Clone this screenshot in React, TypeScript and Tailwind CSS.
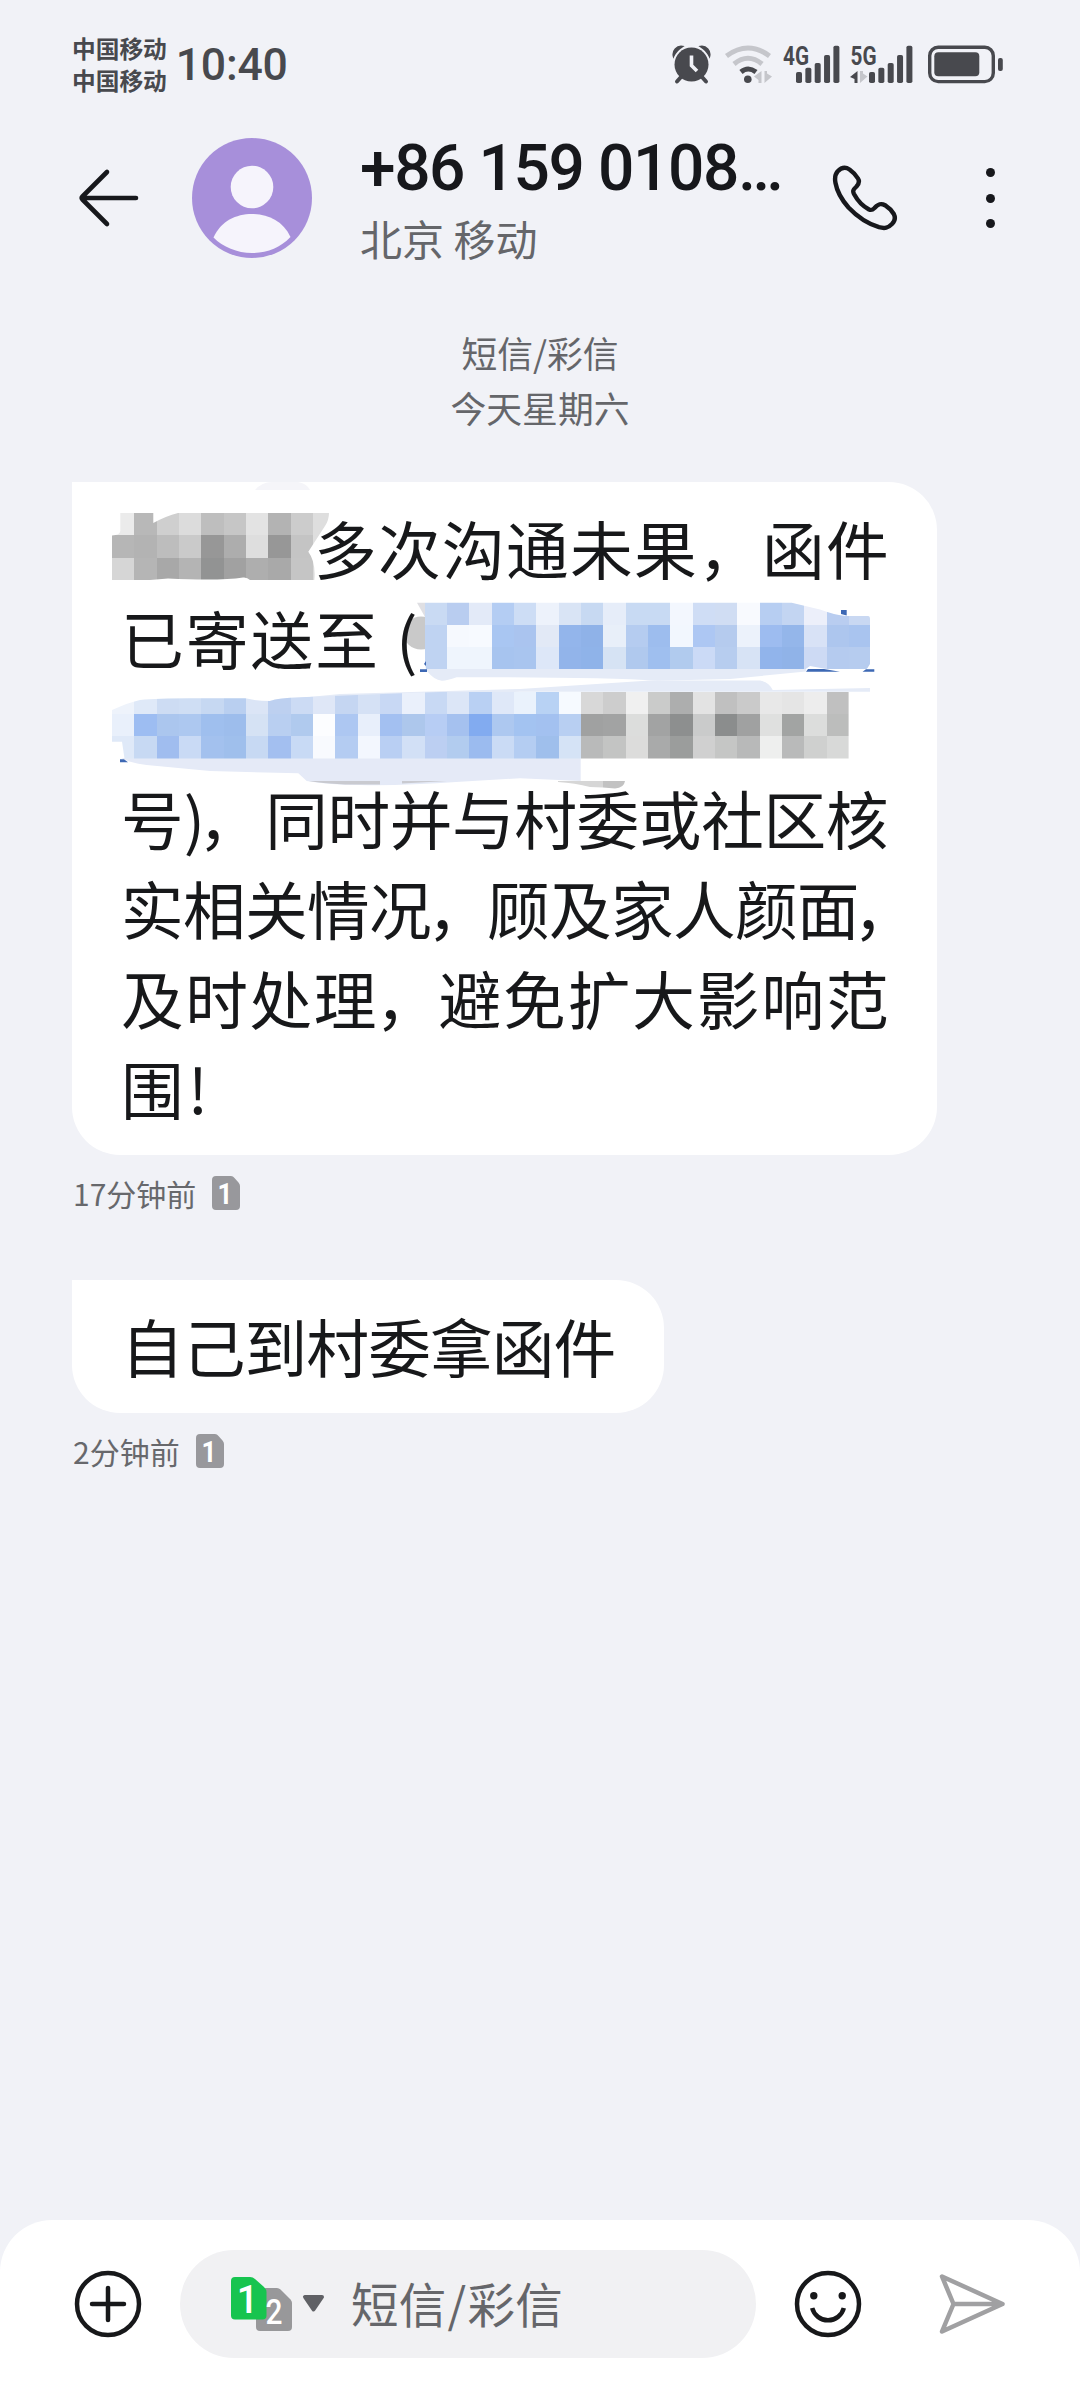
import React from 'react';

const CELL = 22.33;

type MosaicRow = { row: number; col: number; colors: string };

// redacted areas, one hex colour per cell
const nameRows: MosaicRow[] = [
  { row: 0, col: 0, colors: 'ebebeb b8b8b8 cfcfcf dcdcdc bebebe c6c6c6 e3e3e3 b3b3b3 cccccc dedede' },
  { row: 1, col: 0, colors: 'b6b6b6 b3b3b3 bdbdbd cacaca 979797 adadad dedede 979797 c4c4c4 dedede' },
  { row: 2, col: 0, colors: 'd6d6d6 b5b5b5 a8a8a8 b4b4b4 929393 a1a1a1 aeaeae a9a9a9 c5c5c5 dadada' },
];

const addressTopRows: MosaicRow[] = [
  { row: 4, col: 14, colors: 'c9daf3 b9cdf0 e3eaf8 b4cdf3 cdddf5 edf2fb d9e4f5 c7d9f2 e6edf9 c8daf3 c8daf3 f3f7fe cfddf5 d0ddf3 f8fafe b7cef2 c3d5f2 eceffa b9cdf0 c9d8f2' },
  { row: 5, col: 14, colors: 'bfd3f2 f6f9fe f7faff a9c6f2 aac4ef e2e9f6 93b5eb 8fb2e8 e8eff9 b5ccf0 9dbdee f2f7fe adc7f3 b5cbee ecf2fb 9dbcf0 94b6ea d8e2f6 adc6ee a9c4ef' },
  { row: 6, col: 14, colors: 'bfd3f2 eff5fd eff5fd a7c4ef a9c5ef dde7f8 92b4ea 8fb3e9 d6e3f4 b0c9ee 9fbfef b1cbee cbdaf6 b7cdef d7e3f5 91b4eb 90b3e8 cddaf4 b5cbef b6ccef' },
];

const addressBottomRows: MosaicRow[] = [
  { row: 8, col: 0, colors: 'eef3fb dfe9f8 cddcf3 cfdef4 c6d8f2 b9cff0 dbe5f6 bdd0f0 ccdbf4 dfe7f7 c5d6f2 d5e1f5 c8d8f4 eaf0fb c8d9f4 dce6f7 b9d0f3 dfe8f8 eaf2fc b8d2f4 f6faff d8d8d8 cdcdcd f0f0f0 cacbca adaeae e3e3e3 c0c0c0 cacaca e8e8e8 e5e5e5 ededed c0c0c0' },
  { row: 9, col: 0, colors: 'e9f0fb 9dbdf2 abc6ee adc8f0 9fbfee 9dbdec d5e2f4 b9cff1 b0caee fcfdff adc7f2 e8effb a3c0f1 adc7ec b7cdf4 a5c1ef 82abf0 adc8f0 a3c3f1 a3c1f0 b8cff2 a0a1a1 a2a3a3 dcdddc a2a3a3 8d8f8f cacbcb 8b8d8d a0a1a1 dfe0df a2a4a3 dcdddc bcbdbc' },
  { row: 10, col: 0, colors: 'dfe9f8 c7d9f3 a0bdef c9daf5 a3c1ee 9fbfec c7d9f3 a3bff0 c8daf5 f8fafe b4ccf2 f3f7fe b9cff3 d2e0f6 bccff2 b2ccef 9bbbef cadbf5 b4cdf2 9fbfec d5e3f6 b9baba c3c4c3 dcdcdb a9aaaa 9b9d9c d0d0d0 c5c6c5 b8b9b9 eeefee b9baba cfd0cf d8d9d8' },
];

function Cells({ rows }: { rows: MosaicRow[] }) {
  return (
    <>
      {rows.map(({ row, col, colors }) =>
        colors.split(' ').map((c, i) => (
          <rect
            key={`${row}-${i}`}
            x={112 + (col + i) * CELL}
            y={513 + row * CELL}
            width={CELL}
            height={CELL}
            fill={`#${c}`}
            shapeRendering="crispEdges"
          />
        ))
      )}
    </>
  );
}

function Mosaic() {
  return (
    <svg className="absolute left-0 top-0 h-[673px] w-[865px]" viewBox="72 482 865 673">
      <defs>
        <clipPath id="name">
          <path d="M120.3 513H153.3V523Q166 516 178 513H329Q329 520 325 526L308.3 551.7Q316 562 314.3 580H250Q247 577 243 577.5Q220 581 168 578.5L150 580H112V535.5Q120 535 120.3 531Z" />
        </clipPath>
        <clipPath id="addressTop">
          <path d="M424 602.7H791.7L820 609.5Q835 615 846 616H868Q870 616 870 619V664Q866 672 858 673Q840 673.5 829 669.5L810 666L805 669.5H426L424.5 655Z" />
        </clipPath>
        <clipPath id="addressBottom">
          <path d="M112 710Q130 702 140 700Q160 698 200 698.3H245.3Q257 701 270 701Q278 698 300 697.3L402 693.3L470 691H848.6V758.6H124.5L122 741.7H112Z" />
        </clipPath>
      </defs>
      <path d="M255 490Q262 482 272 482H298Q306 483 310 490Z" fill="#f5f5f9" />
      <ellipse cx="421" cy="633" rx="17.5" ry="16.5" fill="#c9c9c9" />
      <path d="M417 602.7H425V617Z" fill="#dfdfe3" />
      <path d="M425 669H806V671.5L730 679L657 680.7Q600 677 456.7 677.3Q446 681 441.7 680.7Q434 680 427 671Z" fill="#e5ebf7" />
      <path d="M268 701L340 694L520 689L650 680.5H760Q769 682 772.7 690L870 688V691.7H520L300 700Z" fill="#e5ebf7" />
      <path d="M121.3 758H580.7V781L520 778.3L460 781.7Q400 786 360 785Q330 785 306.7 781L298.3 773.3L210 771L146.7 765Q130 763 121.3 758Z" fill="#e5eaf7" />
      <path d="M309 781H380V784.5H345Q320 783 309 781ZM402 781H447L402 783.5Z" fill="#c9cad0" />
      <path d="M558 781H603V787.5L590 787Q575 783 558 782Z" fill="#d6d6d6" />
      <path d="M603 781H625Q624 788 615 788.5L603 787.5Z" fill="#c2c2c2" />
      <g clipPath="url(#name)"><Cells rows={nameRows} /></g>
      <g clipPath="url(#addressTop)"><Cells rows={addressTopRows} /></g>
      <g clipPath="url(#addressBottom)"><Cells rows={addressBottomRows} /></g>
      <g fill="#3d68b4">
        <path d="M420 669.3H427V672H420ZM424 664L426 661V666Z" />
        <path d="M806 671.8L808 669H824L840 671.8ZM862.5 671.8L866 669.3H874.3V671.8Z" />
        <path d="M841 610H846.7V615.5L841 614ZM120 759.3H124L128 762.2H120Z" />
      </g>
    </svg>
  );
}

function SignalBars({ x }: { x: number }) {
  const tops = [72, 67.7, 63, 55, 45.7];
  return (
    <>
      {tops.map((top, i) => (
        <rect key={top} x={x + i * 9.35} y={top} width="6" height={83 - top} rx="1.8" />
      ))}
    </>
  );
}

function StatusBar() {
  return (
    <div className="flex h-[130px] items-center justify-between pl-[72px] pr-[77px] text-[#48494e]">
      <div className="flex items-center">
        <div className="mb-[2px] text-[23.7px] font-bold leading-8">
          <div>中国移动</div>
          <div>中国移动</div>
        </div>
        <div className="ml-[9px] whitespace-nowrap font-[Roboto] text-[44.5px] font-medium leading-none tracking-[-0.2px]">10:40</div>
      </div>
      <svg className="h-[60px] w-[331px]" viewBox="672 35 331 60" fill="#48494e">
        <g>
          <circle cx="691.5" cy="64.5" r="17" />
          <path d="M673.5 56.5A8 8 0 0 1 682.5 46.5A22 22 0 0 0 673.5 56.5ZM709.5 56.5A8 8 0 0 0 700.5 46.5A22 22 0 0 1 709.5 56.5Z" stroke="#48494e" strokeWidth="1.5" />
          <path d="M681 77L677 81.5M702 77L706 81.5" stroke="#48494e" strokeWidth="4" strokeLinecap="round" />
          <path d="M691.5 55.5V65.5L697 71" fill="none" stroke="#f1f2f7" strokeWidth="3.6" />
        </g>
        <g fill="none" strokeWidth="5">
          <path d="M726.5 56Q748 40 769.500 56" stroke="#c5c6cb" />
          <path d="M734 64Q748 52.500 762 64" stroke="#c5c6cb" />
          <path d="M741 72Q748 66 756 72" stroke="#48494e" />
        </g>
        <circle cx="747.8" cy="79.3" r="3.8" />
        <path d="M761.5 71V83H758.5V80L754 76.5ZM764.5 71V83L772 76.5L767 73.5V71Z" fill="#c5c6cb" />
        <text x="783" y="64.6" textLength="26" lengthAdjust="spacingAndGlyphs" fontFamily="Roboto" fontWeight="700" fontSize="26">4G</text>
        <SignalBars x={796} />
        <text x="850.5" y="64.6" textLength="26" lengthAdjust="spacingAndGlyphs" fontFamily="Roboto" fontWeight="700" fontSize="26">5G</text>
        <path d="M857.5 71V83H854.5V79L850 77Z" />
        <path d="M860 71V83L867.5 76.5L863 73.5V71Z" fill="#c5c6cb" />
        <SignalBars x={869} />
        <rect x="929.7" y="47.2" width="63.6" height="34.4" rx="8.5" fill="none" stroke="#48494e" strokeWidth="3.4" />
        <rect x="934.3" y="52.3" width="45" height="24" rx="4" />
        <rect x="998" y="58" width="4.8" height="13" rx="2" />
      </svg>
    </div>
  );
}

function Header() {
  return (
    <header className="flex h-[136px] items-center pl-[76px] pr-[80px]">
      <svg className="h-16 w-16" viewBox="76 166 64 64" fill="none" stroke="#17181c" strokeWidth="4.6" strokeLinecap="round" strokeLinejoin="round">
        <path d="M136 198H82M107 172L82.5 196.5Q81 198 82.5 199.5L107 224" />
      </svg>
      <svg className="ml-[52px] h-[120px] w-[120px]" viewBox="192 138 120 120">
        <circle cx="252" cy="198" r="60" fill="#a78fda" />
        <circle cx="252" cy="187" r="21.3" fill="#f6f4fc" />
        <path d="M213.5 237.5C221 221 236 214 252 214S283 221 290.5 237C280 248 267 253 252 253S223 247 213.5 237.5Z" fill="#f6f4fc" />
      </svg>
      <div className="ml-12 flex w-[430px] flex-col pt-[3px]">
        <div className="whitespace-nowrap font-[Roboto] text-[64px] font-medium leading-[76px] tracking-[-1.4px] text-[#17181c]">+86 159 0108…</div>
        <div className="text-[42px] leading-[61px] text-[#65666a]">北京 移动</div>
      </div>
      <svg className="ml-auto h-[68px] w-[68px]" viewBox="830 164 68 68" fill="none" stroke="#17181c" strokeWidth="4.4" strokeLinejoin="round">
        <path d="M836.5 171.5C840.5 167.3 844.5 166.8 848.5 169.5C852 172 855 175 857 178.5C858.8 181.5 858 183.8 855.5 186.5C852 189.8 851.5 191 853 194C857 201.5 862.5 206.5 868 209.5C870.5 210.5 871.5 210 873.5 208C877.5 203.5 880 203 884 205.2C888 207.8 891 211 892.8 214C894.8 218 894 221 891 224C887 228 884 228.8 878 227.2C866 223.5 856 216.5 847.5 207.5C840.5 199.5 836 191.5 834.5 183C833.5 178 834 174.5 836.5 171.5Z" />
      </svg>
      <div className="ml-[87px] mr-[5px] flex flex-col gap-[16.6px]">
        <i className="h-[9px] w-[9px] rounded-full bg-[#17181c]" />
        <i className="h-[9px] w-[9px] rounded-full bg-[#17181c]" />
        <i className="h-[9px] w-[9px] rounded-full bg-[#17181c]" />
      </div>
    </header>
  );
}

function MessageMeta({ time }: { time: string }) {
  return (
    <div className="flex h-[76px] items-center gap-4 pl-[1px] text-[30px] text-[#67686c]">
      <span>{time}</span>
      <svg className="h-[34px] w-[28px]" viewBox="0 0 28 34">
        <path d="M4 0H19Q21 0 22.5 2L26.5 6.5Q28 8 28 10V30Q28 34 24 34H4Q0 34 0 30V4Q0 0 4 0Z" fill="#98989c" />
        <text x="13" y="28" textAnchor="middle" fontFamily="Roboto" fontWeight="700" fontSize="30" textLength="15" lengthAdjust="spacingAndGlyphs" fill="#fff">1</text>
      </svg>
    </div>
  );
}

function Messages() {
  return (
    <main className="flex h-[1738px] flex-col items-start pl-[72px] text-[62.7px] leading-[90px] text-[#17181a]">
      <div className="relative h-[673px] w-[865px] whitespace-nowrap rounded-[48px] rounded-tl-none bg-white pl-[49px] pr-[49px] pt-5">
        <Mosaic />
        <div className="relative flex h-[90px] pl-[193px] tracking-[1.3px]">多次沟通未果，函件</div>
        <div className="relative flex h-[90px] tracking-[2.1px]">
          <span>已寄送至</span>
          <span className="ml-4">(</span>
        </div>
        <div className="h-[90px]" />
        <div className="relative flex h-[90px]">
          <span>号)</span>
          <span className="-ml-[7px]">，</span>
          <span className="ml-auto tracking-[-0.4px]">同时并与村委或社区核</span>
        </div>
        <div className="flex h-[90px] tracking-[-0.7px]">
          <span>实相关情况</span>
          <span className="-ml-1 -mr-[2px]">，</span>
          <span>顾及家人颜面</span>
          <span className="-ml-[6px]">，</span>
        </div>
        <div className="flex h-[90px] tracking-[1.6px]">
          <span>及时处理</span>
          <span className="-ml-[3px] -mr-[1px]">，</span>
          <span className="tracking-[1.9px]">避免扩大影响范</span>
        </div>
        <div className="flex h-[90px]">围<span className="ml-1">!</span></div>
      </div>
      <MessageMeta time="17分钟前" />
      <div className="mt-[49px] flex h-[133px] w-[592px] items-center whitespace-nowrap rounded-[48px] rounded-tl-none bg-white pb-1 pl-[49px] tracking-[-0.9px]">
        自己到村委拿函件
      </div>
      <MessageMeta time="2分钟前" />
    </main>
  );
}

function Composer() {
  return (
    <footer className="flex h-[168px] items-center rounded-t-[52px] bg-white pl-[74px] pr-[74px]">
      <svg className="h-[68px] w-[68px]" viewBox="-34 -34 68 68" fill="none" stroke="#17181a" strokeWidth="4.5" strokeLinecap="round">
        <circle r="31" />
        <path d="M-16 0H16M0 -16V16" />
      </svg>
      <div className="ml-[38px] flex h-[108px] w-[576px] items-center rounded-full bg-[#f1f1f3] pl-[50px]">
        <svg className="h-[56px] w-[98px]" viewBox="230 2276 98 56">
          <path d="M260 2288H277Q279 2288 280.5 2289.5L290.5 2299.5Q292 2301 292 2303V2327Q292 2331 288 2331H260Q256 2331 256 2327V2292Q256 2288 260 2288Z" fill="#98989a" />
          <path d="M235 2277H250Q253 2277 255 2279L264 2287Q266.5 2289.5 266.5 2292V2315.5Q266.5 2319.5 262.5 2319.5H235Q231 2319.5 231 2315.5V2281Q231 2277 235 2277Z" fill="#17c44f" />
          <text x="247.5" y="2312.5" textAnchor="middle" fontFamily="Roboto" fontWeight="500" fontSize="38" fill="#fff">1</text>
          <text x="274" y="2324" textAnchor="middle" fontFamily="Roboto" fontWeight="500" fontSize="35" fill="#fff" textLength="17" lengthAdjust="spacingAndGlyphs">2</text>
          <path d="M305 2297H322L313.5 2309.5Z" fill="#606165" stroke="#606165" strokeWidth="4" strokeLinejoin="round" />
        </svg>
        <span className="mb-[3px] ml-[23px] whitespace-nowrap text-[47.5px] leading-none tracking-[0.3px] text-[#65666a]">短信<span className="mx-[1px]">/</span>彩信</span>
      </div>
      <svg className="ml-[38px] h-[68px] w-[68px]" viewBox="-34 -34 68 68" fill="none" stroke="#17181a" strokeWidth="4.5">
        <circle r="31" />
        <path d="M-15.8 4A16.3 16.3 0 0 0 15.8 4" />
        <circle cx="-14.2" cy="-8.3" r="3.7" fill="#17181a" stroke="none" />
        <circle cx="14.2" cy="-8.3" r="3.7" fill="#17181a" stroke="none" />
      </svg>
      <svg className="ml-auto h-[64px] w-[68px]" viewBox="938 2272 68 64" fill="none" stroke="#a0a0a2" strokeWidth="4.5" strokeLinejoin="round">
        <path d="M942 2276.5L1002.5 2304L942 2331.5L953.5 2304ZM953.5 2304H1002" />
      </svg>
    </footer>
  );
}

export default function App() {
  return (
    <div className="flex h-[2388px] w-[1080px] flex-col overflow-hidden bg-[#f1f2f7] font-['Noto_Sans_CJK_SC',sans-serif]">
      <StatusBar />
      <Header />
      <div className="flex h-[216px] flex-col items-center pt-[59px] text-[35.8px] leading-[55px] text-[#65666a]">
        <div>短信/彩信</div>
        <div>今天星期六</div>
      </div>
      <Messages />
      <Composer />
    </div>
  );
}
